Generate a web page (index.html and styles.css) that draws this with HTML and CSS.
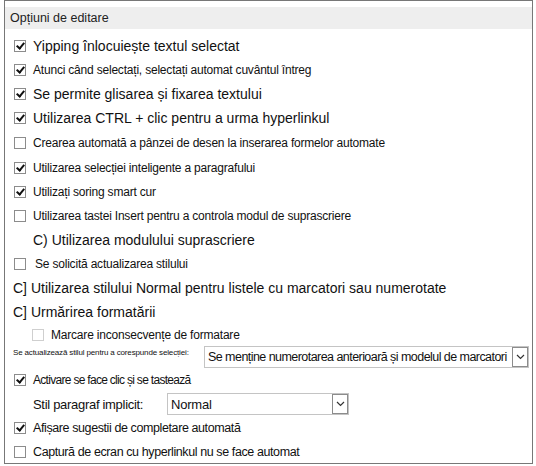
FILE: index.html
```html
<!DOCTYPE html>
<html lang="ro">
<head>
  <meta charset="UTF-8">
  <title>Opțiuni de editare</title>
  <link rel="stylesheet" href="styles.css">
</head>
<body>
  <div class="panel">
    <div class="panel-title">Opțiuni de editare</div>

    <div class="row"><span class="box checked"></span><span class="big">Yipping înlocuiește textul selectat</span></div>
    <div class="row"><span class="box checked"></span><span class="small">Atunci când selectați, selectați automat cuvântul întreg</span></div>
    <div class="row"><span class="box checked"></span><span class="big">Se permite glisarea și fixarea textului</span></div>
    <div class="row"><span class="box checked"></span><span class="big">Utilizarea CTRL + clic pentru a urma hyperlinkul</span></div>
    <div class="row tall"><span class="box"></span><span class="small">Crearea automată a pânzei de desen la inserarea formelor automate</span></div>
    <div class="row"><span class="box checked"></span><span class="small">Utilizarea selecției inteligente a paragrafului</span></div>
    <div class="row"><span class="box checked"></span><span class="small">Utilizați soring smart cur</span></div>
    <div class="row"><span class="box"></span><span class="small">Utilizarea tastei Insert pentru a controla modul de suprascriere</span></div>
    <div class="row indent"><span class="big">C) Utilizarea modulului suprascriere</span></div>
    <div class="row"><span class="box"></span><span class="small pushed">Se solicită actualizarea stilului</span></div>
    <div class="row flush"><span class="big">C] Utilizarea stilului Normal pentru listele cu marcatori sau numerotate</span></div>
    <div class="row flush"><span class="big">C] Urmărirea formatării</span></div>
    <div class="row short sub"><span class="box disabled"></span><span class="small">Marcare inconsecvențe de formatare</span></div>

    <div class="row flush select-row">
      <span class="tiny">Se actualizează stilul pentru a corespunde selecției:</span>
      <div class="select wide">
        <span class="select-text">Se menține numerotarea anterioară și modelul de marcatori</span>
        <span class="select-btn">
          <svg width="9" height="6" viewBox="0 0 9 6"><path d="M1 1l3.5 3.5L8 1" fill="none" stroke="#333" stroke-width="1.2"/></svg>
        </span>
      </div>
    </div>

    <div class="row"><span class="box checked"></span><span class="tight">Activare se face clic și se tastează</span></div>
    <div class="row indent">
      <span class="label">Stil paragraf implicit:</span>
      <div class="select narrow">
        <span class="select-text">Normal</span>
        <span class="select-btn">
          <svg width="9" height="6" viewBox="0 0 9 6"><path d="M1 1l3.5 3.5L8 1" fill="none" stroke="#333" stroke-width="1.2"/></svg>
        </span>
      </div>
    </div>
    <div class="row"><span class="box checked"></span><span class="mid">Afișare sugestii de completare automată</span></div>
    <div class="row"><span class="box"></span><span class="mid">Captură de ecran cu hyperlinkul nu se face automat</span></div>
  </div>
</body>
</html>
```

FILE: styles.css
```css
body {
  margin: 0;
  font-family: "Liberation Sans", Arial, sans-serif;
  color: #111;
  background: #fff;
}
.panel {
  margin-left: 4px;
  width: 529px;
  height: 464px;
  border: 1px solid #777;
  box-sizing: border-box;
  overflow: hidden;
}
.panel-title {
  margin-top: 6px;
  height: 22px;
  line-height: 22px;
  background: #eeeeee;
  padding-left: 5px;
  font-size: 12.5px;
  color: #222;
  margin-bottom: 5px;
}
.row {
  height: 24px;
  display: flex;
  align-items: center;
  padding-left: 9px;
  white-space: nowrap;
}
.row.tall {
  height: 26px;
}
.row.short {
  height: 22px;
}
.row.indent {
  padding-left: 28px;
}
.row.flush {
  padding-left: 8px;
}
.row.sub {
  padding-left: 27px;
}
.box {
  width: 12px;
  height: 12px;
  border: 1px solid #8c8c8c;
  box-sizing: border-box;
  background: #fff;
  margin-right: 7px;
  flex: none;
  position: relative;
}
.box.checked::after {
  content: "";
  position: absolute;
  left: 3px;
  top: 0px;
  width: 3px;
  height: 6px;
  border-right: 2px solid #111;
  border-bottom: 2px solid #111;
  transform: rotate(40deg);
}
.box.disabled {
  border-color: #cfcfcf;
}
.big {
  font-size: 14px;
}
.mid {
  font-size: 12.5px;
  letter-spacing: -0.4px;
}
.small {
  font-size: 12px;
  letter-spacing: -0.2px;
}
.tight {
  font-size: 12px;
  letter-spacing: -0.7px;
}
.label {
  font-size: 13px;
  letter-spacing: -0.3px;
  width: 134px;
}
.pushed {
  margin-left: 2px;
}
.tiny {
  font-size: 8px;
  letter-spacing: -0.15px;
  width: 191px;
  align-self: flex-start;
  margin-top: 2px;
}
.select-row {
  height: 22px;
  align-items: flex-start;
}
.select {
  position: relative;
  height: 22px;
  border: 1px solid #c4c4c4;
  box-sizing: border-box;
  display: flex;
  align-items: center;
  overflow: hidden;
  background: #fff;
}
.select.wide {
  width: 325px;
}
.select.narrow {
  width: 182px;
}
.select-text {
  font-size: 13px;
  padding-left: 3px;
  letter-spacing: -0.2px;
}
.select.wide .select-text {
  font-size: 12.5px;
  letter-spacing: -0.55px;
}
.select-btn {
  position: absolute;
  right: 0;
  top: 0;
  width: 16px;
  height: 20px;
  border: 1px solid #8c8c8c;
  box-sizing: border-box;
  background: #fff;
  display: flex;
  align-items: center;
  justify-content: center;
}
```
